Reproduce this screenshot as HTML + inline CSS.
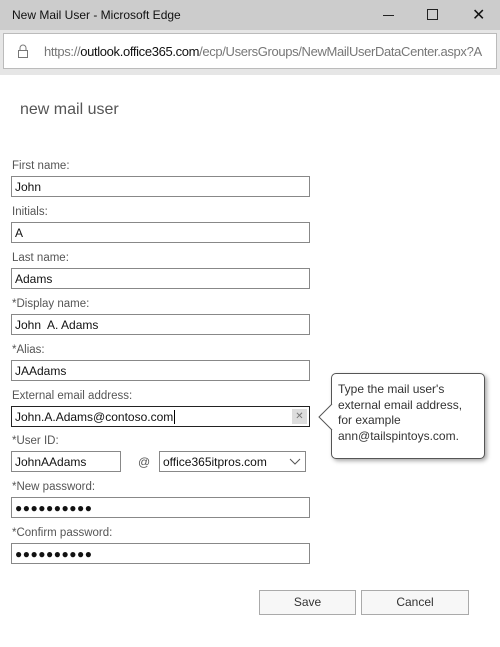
<!DOCTYPE html>
<html><head><meta charset="utf-8"><style>
*{margin:0;padding:0;box-sizing:border-box}
body{width:500px;height:647px;background:#fff;font-family:"Liberation Sans",sans-serif;position:relative;overflow:hidden;color:#333}
.tb{position:absolute;left:0;top:0;width:500px;height:30px;background:#cccccc;font-size:12px;color:#111}
.ab{position:absolute;left:0;top:30px;width:500px;height:45px;background:#e6e6e6}
.url{position:absolute;left:3px;top:3px;width:494px;height:36px;background:#fff;border:1px solid #bbb;font-size:13px;letter-spacing:-0.35px;color:#777;padding:10px 0 0 40px;white-space:nowrap;overflow:hidden}
.url b{font-weight:normal;color:#111}
.h{position:absolute;left:20px;top:101px;font-size:16px;color:#555}
.l{position:absolute;left:12px;font-size:11.5px;color:#555}
.i{position:absolute;left:11px;width:299px;height:21px;border:1px solid #888;font-size:12px;color:#111;padding:3px 0 0 3px}
.d{font-size:12px;letter-spacing:0.5px}
.btn{position:absolute;top:590px;height:25px;border:1px solid #aaa;background:#f7f7f7;font-size:12px;color:#333;text-align:center;line-height:23px}
.tip{position:absolute;left:331px;top:373px;width:154px;height:86px;border:1px solid #555;border-radius:5px;background:#fff;box-shadow:2px 2px 4px rgba(0,0,0,.35);font-size:12px;color:#333;padding:8px 14px 0 6px;line-height:15.5px}
</style></head><body>
<div class="tb"><span style="position:absolute;left:12px;top:8px">New Mail User - Microsoft Edge</span>
<div style="position:absolute;left:383px;top:15px;width:11px;border-top:1px solid #222"></div>
<div style="position:absolute;left:427px;top:9px;width:11px;height:11px;border:1px solid #222"></div>
<span style="position:absolute;left:472px;top:5px;font-size:16px">✕</span></div>
<div class="ab"><div class="url">
<svg style="position:absolute;left:13px;top:10px" width="12" height="14" viewBox="0 0 12 14"><path d="M3 6V4a3 3 0 016 0v2" fill="none" stroke="#777"/><rect x="1.5" y="6.5" width="9" height="7" fill="none" stroke="#777"/></svg>
https://<b>outlook.office365.com</b>/ecp/UsersGroups/NewMailUserDataCenter.aspx?A</div></div>
<div class="h">new mail user</div>
<div class="l" style="top:160px">First name:</div><div class="i" style="top:176px">John</div>
<div class="l" style="top:206px">Initials:</div><div class="i" style="top:222px">A</div>
<div class="l" style="top:252px">Last name:</div><div class="i" style="top:268px">Adams</div>
<div class="l" style="top:298px">*Display name:</div><div class="i" style="top:314px">John&nbsp; A. Adams</div>
<div class="l" style="top:344px">*Alias:</div><div class="i" style="top:360px">JAAdams</div>
<div class="l" style="top:390px">External email address:</div><div class="i" style="top:406px;border-color:#222">John.A.Adams@contoso.com<span style="border-left:1px solid #000;margin-left:1px"></span>
<div style="position:absolute;right:2px;top:2px;width:15px;height:15px;background:#ddd;color:#777;font-size:10px;text-align:center;line-height:15px">✕</div></div>
<div class="l" style="top:435px">*User ID:</div>
<div class="i" style="top:451px;width:110px">JohnAAdams</div>
<div style="position:absolute;left:138px;top:455px;font-size:12px;color:#555">@</div>
<div class="i" style="top:451px;left:159px;width:147px">office365itpros.com
<svg style="position:absolute;right:4px;top:6px" width="12" height="7"><path d="M1 1l5 5 5-5" fill="none" stroke="#555"/></svg></div>
<div class="l" style="top:481px">*New password:</div><div class="i d" style="top:497px">●●●●●●●●●●</div>
<div class="l" style="top:527px">*Confirm password:</div><div class="i d" style="top:543px">●●●●●●●●●●</div>
<div class="tip">Type the mail user's external email address, for example ann@tailspintoys.com.</div>
<svg style="position:absolute;left:318px;top:404px" width="15" height="26"><path d="M14 0L1 13l13 13" fill="#fff" stroke="#555"/></svg>
<div class="btn" style="left:259px;width:97px">Save</div>
<div class="btn" style="left:361px;width:108px">Cancel</div>
</body></html>
